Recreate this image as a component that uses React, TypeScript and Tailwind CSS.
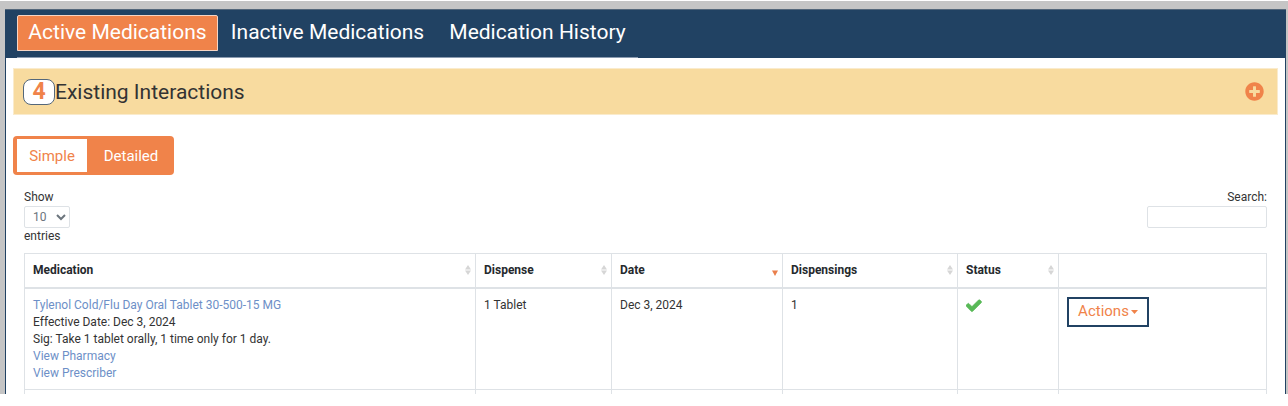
import { FaPlusCircle } from "react-icons/fa";

const tabs = [
  { label: "Active Medications", width: "w-[201px]", active: true },
  { label: "Inactive Medications", width: "w-[219px]", active: false },
  { label: "Medication History", width: "w-[201px]", active: false },
];

type Sort = "both" | "down" | "none";

const columns: { label: string; width: string; sort: Sort }[] = [
  { label: "Medication", width: "w-[451px]", sort: "both" },
  { label: "Dispense", width: "w-[136px]", sort: "both" },
  { label: "Date", width: "w-[171px]", sort: "down" },
  { label: "Dispensings", width: "w-[175px]", sort: "both" },
  { label: "Status", width: "w-[101px]", sort: "both" },
  { label: "", width: "w-[208px]", sort: "none" },
];

function SortMark({ sort }: { sort: Sort }) {
  if (sort === "none") return null;
  return (
    <svg width="6" height="10" viewBox="0 0 6 10" className="shrink-0 overflow-visible" aria-hidden="true">
      {sort === "both" ? (
        <path d="M3 0 6 4.5H0ZM0 5.5H6L3 10Z" fill="#d6d6d6" />
      ) : (
        <path d="M0 5.5H6L3 11Z" fill="#ea7f4c" />
      )}
    </svg>
  );
}

function CheckMark() {
  return (
    <svg width="18" height="18" viewBox="121 64 1792 1792" fill="#58b957" stroke="#58b957" strokeWidth="60" role="img" aria-label="Active">
      <path d="M1671 566q0 40-28 68l-724 724-136 136q-28 28-68 28t-68-28l-136-136-362-362q-28-28-28-68t28-68l136-136q28-28 68-28t68 28l294 295 656-657q28-28 68-28t68 28l136 136q28 28 28 68z" />
    </svg>
  );
}

function Tabs() {
  return (
    <header className="bg-[#214263] px-3 pt-[5px]">
      <nav className="flex h-[43px] w-fit items-start border-b border-[#8b9bb0]">
        {tabs.map((tab) => (
          <a
            key={tab.label}
            href="#"
            className={
              tab.active
                ? `${tab.width} h-9 rounded-t-xs border border-[#f6d5c4] bg-[#f0834a] text-center text-[21px] leading-[33px] whitespace-nowrap text-white`
                : `${tab.width} h-9 border border-transparent text-center text-[21px] leading-[33px] whitespace-nowrap text-white`
            }
          >
            {tab.label}
          </a>
        ))}
      </nav>
    </header>
  );
}

function Interactions() {
  return (
    <section className="flex h-[47px] items-center justify-between border border-[#faebcc] bg-[#f8db9f] pr-[13px] pl-[9px]">
      <h2 className="flex items-center text-[21px] leading-7 text-[#333]">
        <span className="flex h-[26px] w-8 items-center justify-center rounded-lg border border-[#54677a] bg-white text-[23px] font-bold text-[#f0834a]">
          4
        </span>
        Existing Interactions
      </h2>
      <button type="button" aria-label="Show interactions" className="text-[#f0834a]">
        <FaPlusCircle size={19} />
      </button>
    </section>
  );
}

function MedicationTable() {
  return (
    <table className="w-full table-fixed border-collapse border border-b-0 border-[#dee2e6] text-left">
      <thead>
        <tr className="h-[34px] border-b-2 border-[#dee2e6]">
          {columns.map((col) => (
            <th key={col.label} className={`${col.width} border-r border-[#dee2e6] pr-1 pl-2 font-bold text-[#25292d]`}>
              <div className="flex items-center justify-between">
                {col.label}
                <SortMark sort={col.sort} />
              </div>
            </th>
          ))}
        </tr>
      </thead>
      <tbody>
        <tr className="border-b border-[#dee2e6] align-top *:border-r *:border-[#dee2e6] *:px-2 *:pt-2">
          <td className="pb-[7px]">
            <a href="#" className="block text-[#6d8fc7]">Tylenol Cold/Flu Day Oral Tablet 30-500-15 MG</a>
            <p>Effective Date: Dec 3, 2024</p>
            <p>Sig: Take 1 tablet orally, 1 time only for 1 day.</p>
            <a href="#" className="block w-fit text-[#6d8fc7]">View Pharmacy</a>
            <a href="#" className="block w-fit text-[#6d8fc7]">View Prescriber</a>
          </td>
          <td>1 Tablet</td>
          <td>Dec 3, 2024</td>
          <td>1</td>
          <td>
            <CheckMark />
          </td>
          <td>
            <button
              type="button"
              className="flex h-[30px] w-[82px] items-center justify-center gap-0.5 border-2 border-[#214263] text-[15px] text-[#f0834a]"
            >
              Actions
              <svg width="7" height="4" viewBox="0 0 7 4" aria-hidden="true">
                <path d="M0 0H7L3.5 4Z" fill="currentColor" />
              </svg>
            </button>
          </td>
        </tr>
        <tr className="h-[5px] *:border-r *:border-[#dee2e6]">
          {columns.map((col) => (
            <td key={col.label} />
          ))}
        </tr>
      </tbody>
    </table>
  );
}

export default function App() {
  return (
    <main className="mt-px bg-[#c5c5c5] pt-2 pr-0.5 pl-[5px] font-[Roboto,sans-serif] text-xs leading-[17px] text-[#333]">
      <div className="border-t border-[#54677a] bg-white">
        <Tabs />
        <div className="border-x border-[#214263] px-[7px] pt-2.5">
          <Interactions />
          <div className="mt-[21px] flex h-[39px] w-[161px] rounded-sm bg-[#f0834a] p-[3px] text-[15px] leading-6">
            <button type="button" className="w-[71px] border-l border-[#f0834a] bg-white text-[#f0834a]">Simple</button>
            <button type="button" className="flex-1 pl-1 text-white">Detailed</button>
          </div>
          <div className="px-[11px] pt-[14px]">
            <div className="flex items-start justify-between pb-[9px] leading-4">
              <label className="flex flex-col items-start">
                Show
                <select defaultValue="10" className="mt-px h-[22px] w-[46px] rounded-xs border border-[#dee2e6] bg-white pl-1 text-[#6c757d]">
                  <option>10</option>
                  <option>25</option>
                  <option>50</option>
                </select>
                entries
              </label>
              <label className="flex flex-col items-end">
                Search:
                <input type="search" className="mt-px h-[22px] w-[120px] rounded-xs border border-[#dee2e6] bg-white px-2" />
              </label>
            </div>
            <MedicationTable />
          </div>
        </div>
      </div>
    </main>
  );
}
